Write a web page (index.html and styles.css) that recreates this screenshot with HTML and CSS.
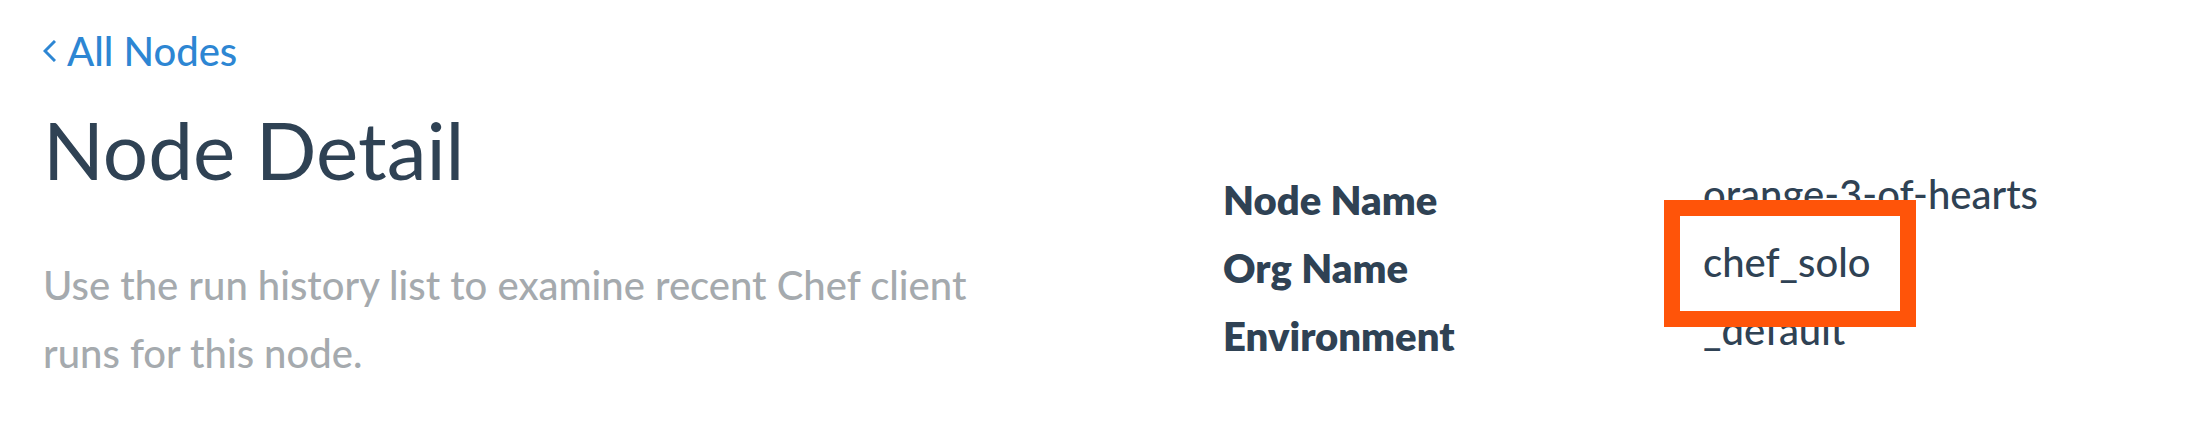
FILE: index.html
```html
<!DOCTYPE html>
<html lang="en">
<head>
<meta charset="utf-8">
<title>Node Detail</title>
<link rel="stylesheet" href="styles.css">
</head>
<body>
<main class="page">
  <section class="intro">
    <a class="back" href="#"><svg class="chevron" viewBox="0 0 13 22" aria-hidden="true"><path d="M12 1 2 11l10 10"/></svg>All Nodes</a>
    <h1 class="title">Node Detail</h1>
    <p class="summary">Use the run history list to examine recent Chef client runs for this node.</p>
  </section>
  <dl class="details">
    <div class="row"><dt>Node Name</dt><dd>orange-3-of-hearts</dd></div>
    <div class="row"><dt>Org Name</dt><dd class="marked">chef_solo</dd></div>
    <div class="row"><dt>Environment</dt><dd>_default</dd></div>
  </dl>
</main>
</body>
</html>
```
FILE: styles.css
```css
*, *::after { box-sizing: border-box; }
body {
  margin: 0;
  background: #fff;
  color: #2f4254;
  font: 500 40px/68px "Lato Medium", Lato, "Open Sans", sans-serif;
}
.page {
  display: grid;
  grid-template-columns: 1180fr 934fr;
  padding: 13px 43px;
}
.back {
  display: inline-flex;
  align-items: center;
  gap: 11px;
  color: #2d86d3;
  text-decoration: none;
}
.chevron {
  width: 13px;
  height: 22px;
  fill: none;
  stroke: currentColor;
  stroke-width: 3;
}
.title {
  margin: 16px 0 54px;
  font: 400 80px/96px Lato, "Open Sans", sans-serif;
}
.summary {
  max-width: 960px;
  margin: 0;
  color: #a5aaae;
}
.details { margin: 147px 0 0; }
.row {
  display: grid;
  grid-template-columns: 480fr 454fr;
}
.row dt {
  padding-top: 6px;
  margin-bottom: -6px;
  font-family: Lato, "Open Sans", sans-serif;
  font-weight: 800;
}
.row dd { margin: 0; }
.marked { position: relative; }
.marked::after {
  content: "";
  position: absolute;
  top: -28px;
  left: -39px;
  width: 252px;
  height: 127px;
  border: 16px solid #ff5409;
}
```
